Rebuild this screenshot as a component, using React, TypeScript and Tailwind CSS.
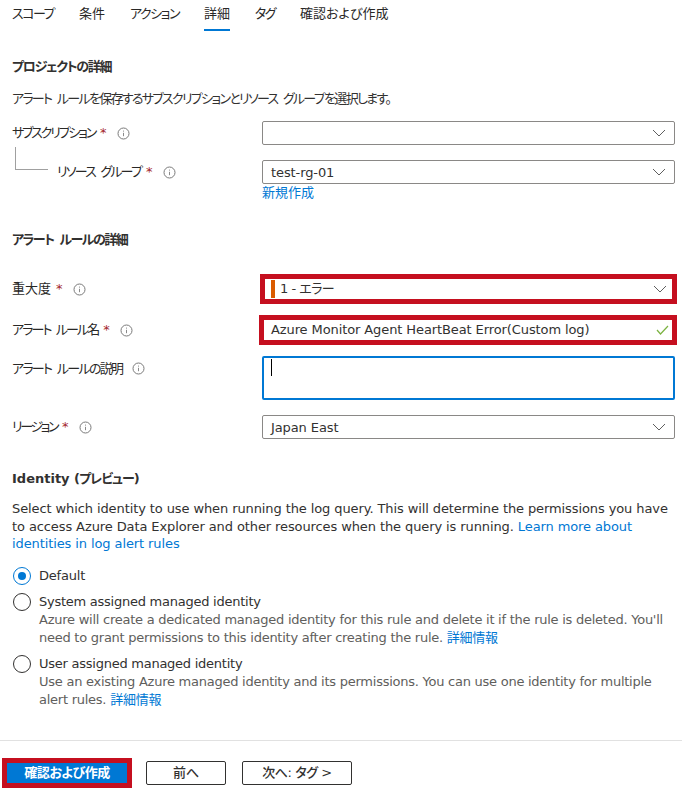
const FONT = "font-['DejaVu_Sans','Noto_Sans_CJK_JP',sans-serif] [font-feature-settings:'palt']";

function Chevron() {
  return (
    <svg width="14" height="8" viewBox="0 0 14 8" fill="none" stroke="#5f5f5f" strokeWidth="1" className="shrink-0">
      <path d="M1 1l6 6 6-6" />
    </svg>
  );
}

function Info() {
  return (
    <svg width="13" height="13" viewBox="0 0 13 13" fill="none" className="shrink-0">
      <circle cx="6.5" cy="6.5" r="5.5" stroke="#7a7a7a" />
      <path d="M6.5 5.8v3.4" stroke="#8a8a8a" />
      <path d="M6.5 3.6v1" stroke="#8a8a8a" />
    </svg>
  );
}

function Label({ text, track, required = true, gap = "ml-[10px]" }: { text: string; track: string; required?: boolean; gap?: string }) {
  return (
    <div className="flex items-center text-[13px] text-[#292827]">
      <span className={track}>{text}</span>
      {required && <span className="ml-[5px] text-[#a4262c]">*</span>}
      <span className={gap}>
        <Info />
      </span>
    </div>
  );
}

function Select({ value }: { value?: string }) {
  return (
    <div className="flex h-[24px] w-[413px] items-center justify-between rounded-[2px] border border-[#8a8886] bg-white pl-2 pr-2">
      <div className="flex items-center pt-px text-[13px] tracking-[-0.1px] text-[#323130]">{value}</div>
      <Chevron />
    </div>
  );
}

function Radio({ checked = false }: { checked?: boolean }) {
  return (
    <span
      className={`flex h-[18px] w-[18px] shrink-0 items-center justify-center rounded-full border bg-white ${
        checked ? "border-[#0078d4]" : "border-[#323130]"
      }`}
    >
      {checked && <span className="h-2 w-2 rounded-full bg-[#0078d4]" />}
    </span>
  );
}

export default function App() {
  const tabs = [
    { label: "スコープ", track: "tracking-[-1.5px]" },
    { label: "条件", track: "" },
    { label: "アクション", track: "tracking-[-1.5px]" },
    { label: "詳細", track: "" },
    { label: "タグ", track: "tracking-[-1.5px]" },
    { label: "確認および作成", track: "" },
  ];

  return (
    <div className={`${FONT} h-[794px] w-[682px] overflow-hidden bg-white text-[13px] text-[#323130]`}>
      {/* タブ */}
      <div className="flex h-[32px] gap-[25px] pl-3">
        {tabs.map((t) => (
          <div key={t.label} className={`relative pt-[5px] leading-[18px] text-[#292827] ${t.track}`}>
            {t.label}
            {t.label === "詳細" && <div className="absolute bottom-[1px] left-0 h-[2px] w-full bg-[#0078d4]" />}
          </div>
        ))}
      </div>

      <div className="pl-3 pt-[26px] font-bold leading-[18px] tracking-[-1.3px]">プロジェクトの詳細</div>
      <div className="pl-3 pt-[14px] leading-[18px] tracking-[-1.7px] [word-spacing:3px]">アラート ルールを保存するサブスクリプションとリソース グループを選択します。</div>

      {/* プロジェクト */}
      <div className="flex items-center justify-between pl-3 pr-[7px] pt-[13px]">
        <Label text="サブスクリプション" track="tracking-[-2.2px]" />
        <Select />
      </div>
      <div className="flex items-center justify-between pl-[15px] pr-[7px] pt-[15px]">
        <div className="flex items-center">
          <div className="-mt-[28px] h-[23px] w-[33px] border-b border-l border-[#a0a0a0]" />
          <div className="ml-[9px]">
            <Label text="リソース グループ" track="tracking-[-1.8px] [word-spacing:3px]" />
          </div>
        </div>
        <Select value="test-rg-01" />
      </div>
      <div className="pl-[262px] leading-[18px] text-[#0078d4]">新規作成</div>

      <div className="pl-3 pt-[29px] font-bold leading-[18px] tracking-[-1.5px] [word-spacing:3px]">アラート ルールの詳細</div>

      {/* 重大度 */}
      <div className="flex items-center justify-between pl-3 pr-[5px] pt-[25px]">
        <Label text="重大度" track="" />
        <div className="h-[30px] w-[417px] border-[5px] border-[#c50f1f] bg-white">
          <div className="flex h-full items-center justify-between pl-[6px] pr-[5px]">
            <div className="flex items-center tracking-[-0.5px]">
              <span className="mr-[5px] h-[18px] w-1 bg-[#da5b00]" />
              1 - エラー
            </div>
            <Chevron />
          </div>
        </div>
      </div>

      {/* アラート ルール名 */}
      <div className="flex items-center justify-between pl-3 pr-[5px] pt-[11px]">
        <Label text="アラート ルール名" track="tracking-[-1.9px] [word-spacing:3px]" />
        <div className="flex h-[30px] w-[418px] items-center justify-between border-[5px] border-[#c50f1f] bg-white pl-[7px] pr-[3px] tracking-[-0.1px]">
          Azure Monitor Agent HeartBeat Error(Custom log)
          <svg width="13" height="10" viewBox="0 0 13 10" fill="none" stroke="#7cb342" strokeWidth="1.2">
            <path d="M1 5l3.5 4L12 1" />
          </svg>
        </div>
      </div>

      {/* 説明 */}
      <div className="flex items-start justify-between pl-3 pr-[7px] pt-[11px]">
        <div className="pt-[3px]">
          <Label text="アラート ルールの説明" track="tracking-[-1.7px] [word-spacing:3px]" required={false} />
        </div>
        <div className="h-[44px] w-[413px] rounded-[2px] border-2 border-[#0078d4] bg-white pl-[7px] pt-[1px]">
          <div className="h-[17px] w-px bg-black" />
        </div>
      </div>

      {/* リージョン */}
      <div className="flex items-center justify-between pl-3 pr-[7px] pt-[15px]">
        <Label text="リージョン" track="tracking-[-2.4px]" />
        <Select value="Japan East" />
      </div>

      <div className="pl-3 pt-[31px] font-bold leading-[18px]">
        Identity <span className="tracking-[-1px]">(プレビュー)</span>
      </div>
      <p className="pl-3 pr-[5px] pt-[12px] leading-[17.5px] tracking-[-0.1px]">
        Select which identity to use when running the log query. This will determine the permissions you have to access Azure Data Explorer and other resources when the query is running.{" "}
        <span className="text-[#0078d4]">Learn more about identities in log alert rules</span>
      </p>

      {/* ラジオ */}
      <div className="flex items-center gap-[8px] pl-[13px] pt-[14px] leading-[18px] tracking-[-0.2px]">
        <Radio checked />
        <span>Default</span>
      </div>
      <div className="flex gap-[8px] pl-[13px] pt-[8px] tracking-[-0.25px]">
        <Radio />
        <div className="leading-[18px]">
          <div>System assigned managed identity</div>
          <div className="text-[#605e5c]">
            Azure will create a dedicated managed identity for this rule and delete it if the rule is deleted. You'll need to grant permissions to this identity after creating the rule. <span className="text-[#0078d4]">詳細情報</span>
          </div>
        </div>
      </div>
      <div className="flex gap-[8px] pl-[13px] pt-[8px] tracking-[-0.25px]">
        <Radio />
        <div className="leading-[18px]">
          <div>User assigned managed identity</div>
          <div className="text-[#605e5c]">
            Use an existing Azure managed identity and its permissions. You can use one identity for multiple alert rules. <span className="text-[#0078d4]">詳細情報</span>
          </div>
        </div>
      </div>

      {/* フッター */}
      <div className="mt-[31px] flex items-center border-t border-[#e1e1e1] pl-[2px] pt-[17px]">
        <div className="border-[5px] border-[#c50f1f]">
          <div className="flex h-[20px] w-[120px] items-center justify-center bg-[#0078d4] font-bold tracking-[-0.5px] text-white">確認および作成</div>
        </div>
        <div className="ml-[14px] flex h-[24px] w-[80px] items-center justify-center rounded-[2px] border border-[#323130] font-medium">前へ</div>
        <div className="ml-[16px] flex h-[24px] w-[110px] items-center justify-center rounded-[2px] border border-[#323130] font-medium tracking-[-0.4px]">次へ: タグ &gt;</div>
      </div>
    </div>
  );
}
